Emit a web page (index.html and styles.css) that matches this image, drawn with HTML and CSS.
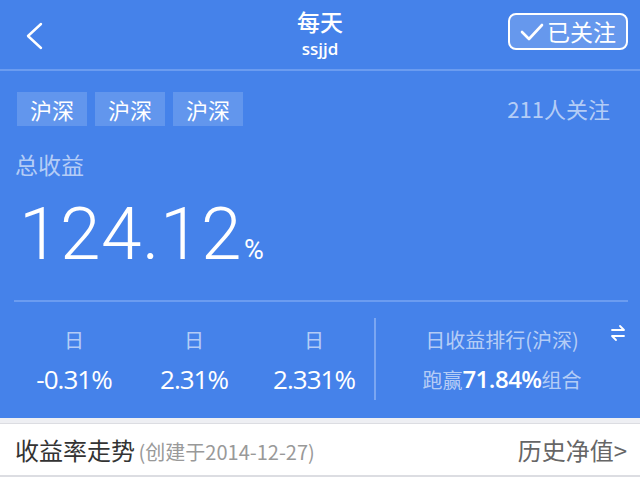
FILE: index.html
```html
<!DOCTYPE html>
<html>
<head>
<meta charset="utf-8">
<link rel="stylesheet" href="styles.css">
</head>
<body>
<div class="page">
  <header class="topbar">
    <div class="back">
      <svg width="20" height="28" viewBox="0 0 20 28"><path d="M17 2 L4 14 L17 26" fill="none" stroke="#fff" stroke-width="2.4" stroke-linecap="round" stroke-linejoin="round"/></svg>
    </div>
    <div class="title">
      <div class="name">每天</div>
      <div class="sub">ssjjd</div>
    </div>
    <div class="follow">
      <svg width="24" height="20" viewBox="0 0 24 20"><path d="M2 10 L9 17 L22 3" fill="none" stroke="#fff" stroke-width="2.6" stroke-linecap="round" stroke-linejoin="round"/></svg>
      <span>已关注</span>
    </div>
  </header>
  <section class="summary">
    <div class="tagrow">
      <div class="tags">
        <span class="tag">沪深</span>
        <span class="tag">沪深</span>
        <span class="tag">沪深</span>
      </div>
      <div class="fans">211人关注</div>
    </div>
    <div class="label">总收益</div>
    <div class="big">124.12<span class="pct">%</span></div>
    <div class="stats">
      <div class="col"><div class="k">日</div><div class="v">-0.31%</div></div>
      <div class="col"><div class="k">日</div><div class="v">2.31%</div></div>
      <div class="col"><div class="k">日</div><div class="v">2.331%</div></div>
      <div class="rank">
        <div class="k">日收益排行(沪深)</div>
        <div class="rv">跑赢<b>71.84%</b>组合</div>
        <svg class="swap" width="16" height="18" viewBox="0 0 16 18"><path d="M2 6 H14 L10 2 M14 12 H2 L6 16" fill="none" stroke="#fff" stroke-width="1.8" stroke-linecap="round" stroke-linejoin="round"/></svg>
      </div>
    </div>
  </section>
  <div class="gap"></div>
  <section class="trend">
    <div class="tl"><span class="tt">收益率走势</span> <span class="td">(创建于2014-12-27)</span></div>
    <div class="tr">历史净值&gt;</div>
  </section>
</div>
</body>
</html>
```
FILE: styles.css
```css
* { box-sizing: border-box; margin: 0; padding: 0; }
body { margin: 0; width: 640px; height: 480px; overflow: hidden; background: #fff; font-family: "Noto Sans CJK SC", "Noto Sans", sans-serif; }
.page { width: 640px; }
.topbar { height: 71px; background: #4582ea; border-bottom: 2px solid #6b9cf0; display: flex; align-items: center; justify-content: space-between; position: relative; padding: 0 12px 0 24px; }
.back { width: 20px; height: 28px; margin-top: 2px; }
.title { position: absolute; left: 0; right: 0; top: 7px; text-align: center; color: #fff; pointer-events: none; }
.title .name { font-size: 23px; line-height: 28px; font-weight: 500; }
.title .sub { font-family: "Open Sans", sans-serif; font-size: 17px; line-height: 20px; font-weight: 600; margin-top: 4px; }
.follow { width: 120px; height: 37px; border: 2px solid #fff; border-radius: 8px; background: rgba(255,255,255,0.18); display: flex; align-items: center; justify-content: center; gap: 3px; color: #fff; font-size: 23px; margin-top: -7px; position: relative; z-index: 1; }
.follow svg { margin-top: 1px; }
.follow span { line-height: 1; }
.summary { background: #4582ea; padding: 21px 12px 0 14px; height: 347px; overflow: hidden; }
.tagrow { display: flex; justify-content: space-between; align-items: center; padding-left: 3px; }
.tags { display: flex; gap: 8px; }
.tag { width: 70px; height: 34px; background: rgba(255,255,255,0.16); color: #fff; font-size: 22px; line-height: 34px; text-align: center; }
.fans { color: rgba(255,255,255,0.62); font-size: 22px; padding-right: 18px; margin-top: -2px; }
.label { color: rgba(255,255,255,0.62); font-size: 23px; line-height: 30px; margin-top: 23px; padding-left: 1px; }
.big { color: #fff; font-family: "Roboto", sans-serif; font-weight: 300; font-size: 73px; line-height: 84px; margin-top: 13px; padding-left: 5px; letter-spacing: 0.5px; }
.big .pct { font-size: 27px; line-height: 1; font-weight: 400; letter-spacing: 0; margin-left: 2px; }
.stats { margin-top: 24px; border-top: 2px solid #6b9cf0; display: flex; padding-top: 16px; height: 116px; }
.col { width: 120px; text-align: center; }
.k { color: rgba(255,255,255,0.62); font-size: 20px; line-height: 24px; margin-top: 10px; }
.v { color: #fff; font-family: "Open Sans", sans-serif; font-size: 26px; line-height: 30px; margin-top: 12px; letter-spacing: -1px; }
.rank { flex: 1; border-left: 2px solid #7aa6f2; height: 82px; text-align: center; position: relative; }
.rv { color: rgba(255,255,255,0.62); font-size: 20px; line-height: 30px; margin-top: 12px; }
.rv b { color: #fff; font-family: "Open Sans", sans-serif; font-size: 24px; font-weight: 600; letter-spacing: -0.5px; }
.swap { position: absolute; right: 2px; top: 6px; }
.gap { height: 6px; background: #eeeff3; border-bottom: 1px solid #dcdde2; }
.trend { height: 53px; border-bottom: 2px solid #dcdde2; display: flex; justify-content: space-between; align-items: center; padding: 0 13px 0 15px; }
.tt { color: #333; font-size: 24px; }
.td { color: #999; font-size: 20px; }
.tr { color: #666; font-size: 24px; }
```
